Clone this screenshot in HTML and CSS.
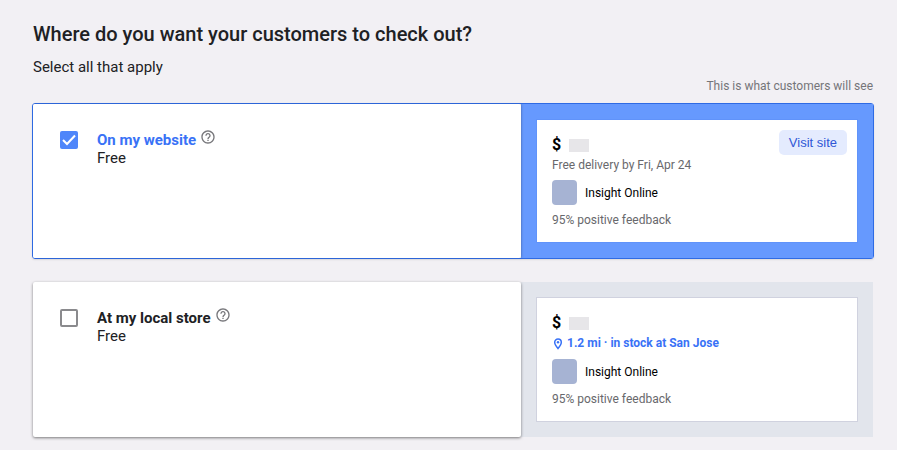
FILE: index.html
```html
<!DOCTYPE html>
<html lang="en">
<head>
    <meta charset="UTF-8">
    <meta name="viewport" content="width=device-width, initial-scale=1.0">
    <title>Checkout options</title>
    <link rel="stylesheet" href="styles.css">
</head>
<body>

    <main class="page">
        <header class="page-header">
            <h1>Where do you want your customers to check out?</h1>
            <p>Select all that apply</p>
        </header>
        <p class="preview-caption">This is what customers will see</p>

        <form class="options">
            <!-- Website -->
            <section class="option option-selected">
                <div class="option-main">
                    <input type="checkbox" id="website" class="option-check" checked>
                    <div class="option-text">
                        <div class="option-title">
                            <label for="website">On my website</label>
                            <button type="button" class="help-button" aria-label="Help">
                                <svg viewBox="0 0 24 24" width="16" height="16"><path d="M11 18h2v-2h-2v2zm1-16C6.480 2 2 6.480 2 12s4.480 10 10 10 10-4.480 10-10S17.520 2 12 2zm0 18c-4.410 0-8-3.590-8-8s3.590-8 8-8 8 3.590 8 8-3.590 8-8 8zm0-14c-2.210 0-4 1.790-4 4h2c0-1.100.900-2 2-2s2 .900 2 2c0 2-3 1.750-3 5h2c0-2.250 3-2.500 3-5 0-2.210-1.790-4-4-4z"/></svg>
                            </button>
                        </div>
                        <p>Free</p>
                    </div>
                </div>
                <div class="preview">
                    <div class="preview-card">
                        <div class="preview-details">
                            <div class="price">$ <span class="price-placeholder"></span></div>
                            <p class="preview-note">Free delivery by Fri, Apr 24</p>
                            <div class="seller"><span class="seller-logo"></span>Insight Online</div>
                            <p class="preview-note">95% positive feedback</p>
                        </div>
                        <button type="button" class="visit-button">Visit site</button>
                    </div>
                </div>
            </section>

            <!-- Local store -->
            <section class="option">
                <div class="option-main">
                    <input type="checkbox" id="local-store" class="option-check">
                    <div class="option-text">
                        <div class="option-title">
                            <label for="local-store">At my local store</label>
                            <button type="button" class="help-button" aria-label="Help">
                                <svg viewBox="0 0 24 24" width="16" height="16"><path d="M11 18h2v-2h-2v2zm1-16C6.480 2 2 6.480 2 12s4.480 10 10 10 10-4.480 10-10S17.520 2 12 2zm0 18c-4.410 0-8-3.590-8-8s3.590-8 8-8 8 3.590 8 8-3.590 8-8 8zm0-14c-2.210 0-4 1.790-4 4h2c0-1.100.900-2 2-2s2 .900 2 2c0 2-3 1.750-3 5h2c0-2.250 3-2.500 3-5 0-2.210-1.790-4-4-4z"/></svg>
                            </button>
                        </div>
                        <p>Free</p>
                    </div>
                </div>
                <div class="preview">
                    <div class="preview-card">
                        <div class="preview-details">
                            <div class="price">$ <span class="price-placeholder"></span></div>
                            <p class="preview-note preview-stock">
                                <svg viewBox="0 0 12 12" width="12" height="12"><path d="M6 1a3.300 3.300 0 0 0-3.300 3.300C2.700 6.700 6 10.500 6 10.500s3.300-3.800 3.300-6.200A3.300 3.300 0 0 0 6 1z" fill="none" stroke="currentColor" stroke-width="1.500"/><circle cx="6" cy="4.300" r="1.200" fill="currentColor"/></svg>
                                1.2 mi · in stock at San Jose
                            </p>
                            <div class="seller"><span class="seller-logo"></span>Insight Online</div>
                            <p class="preview-note">95% positive feedback</p>
                        </div>
                    </div>
                </div>
            </section>
        </form>
    </main>

</body>
</html>
```
FILE: styles.css
```css
* {
    box-sizing: border-box;
}

body {
    margin: 0;
    font-family: Roboto, sans-serif;
    font-size: 15px;
    line-height: 18px;
    background-color: #f2f0f4;
    color: #202124;
}

h1, p {
    margin: 0;
}

button {
    font-family: "Liberation Sans", Arial, sans-serif;
    border: none;
    cursor: pointer;
}

.page {
    padding: 22px 23px 12px 32px;
}

.page-header {
    padding-left: 1px;
}

.page-header h1 {
    font-size: 20px;
    font-weight: 500;
    line-height: 24px;
    margin-bottom: 12px;
}

.preview-caption {
    font-size: 12px;
    line-height: 16px;
    margin: 2px 1px 9px;
    text-align: right;
    color: #757579;
}

.options {
    display: flex;
    flex-direction: column;
    gap: 22px;
}

.option {
    display: grid;
    grid-template-columns: 61fr 44fr;
    border: 1px solid transparent;
    border-radius: 3px;
}

.option-selected {
    border-color: #2f6be4;
    box-shadow: 0 1px 2px rgba(0, 0, 0, 0.1);
}

.option-main {
    display: flex;
    align-items: flex-start;
    gap: 19px;
    padding: 27px;
    background-color: white;
    border-radius: 2px;
    box-shadow: 0 1px 3px rgba(0, 0, 0, 0.5);
    z-index: 1;
}

.option-selected .option-main {
    box-shadow: 1px 0 2px rgba(0, 0, 0, 0.2);
}

.option-check {
    appearance: none;
    width: 18px;
    height: 18px;
    margin: 0;
    border: 2px solid #8a8a8d;
    border-radius: 2px;
    cursor: pointer;
}

.option-check:checked {
    border: none;
    background: #4f86fa url("data:image/svg+xml,%3Csvg xmlns='http://www.w3.org/2000/svg' viewBox='0 0 18 18'%3E%3Cpath d='M3 9l4 4 8-8.500' fill='none' stroke='white' stroke-width='2'/%3E%3C/svg%3E");
}

.option-title {
    display: flex;
    gap: 4px;
    font-weight: 700;
}

.option-selected .option-title {
    color: #3972f6;
}

.help-button {
    width: 16px;
    height: 16px;
    margin-top: -2px;
    padding: 0;
    background: none;
}

.help-button svg {
    display: block;
    fill: #77777b;
}

.preview {
    padding: 15px;
    background-color: #e2e5ec;
}

.option-selected .preview {
    background-color: #6699fe;
}

.preview-card {
    display: flex;
    justify-content: space-between;
    align-items: flex-start;
    padding: 10px 10px 14px 15px;
    background-color: white;
    border: 1px solid #d0d2df;
}

.option-selected .preview-card {
    border-color: #6093fa;
}

.preview-details {
    padding-top: 5px;
    font-size: 12px;
    line-height: 16px;
}

.price {
    display: flex;
    align-items: center;
    gap: 8px;
    font-size: 16px;
    font-weight: 700;
    line-height: 20px;
    color: black;
    margin-bottom: 2px;
}

.price-placeholder {
    width: 20px;
    height: 13px;
    background-color: #e7e6e9;
}

.preview-note {
    color: #68686c;
}

.preview-stock {
    display: flex;
    align-items: center;
    gap: 3px;
    font-weight: 700;
    line-height: 17px;
    color: #3972f6;
}

.seller {
    display: flex;
    align-items: center;
    gap: 8px;
    margin: 7px 0;
    color: black;
}

.seller-logo {
    width: 25px;
    height: 25px;
    background-color: #a6b3d3;
    border-radius: 4px;
}

.visit-button {
    padding: 4px 10px;
    font-size: 13px;
    line-height: 17px;
    background-color: #e4ebfe;
    color: #2f57d6;
    border-radius: 5px;
}
```
